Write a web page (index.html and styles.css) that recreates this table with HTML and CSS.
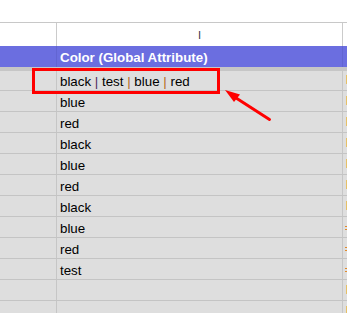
FILE: index.html
```html
<!DOCTYPE html>
<html>
<head>
<meta charset="utf-8">
<link rel="stylesheet" href="styles.css">
</head>
<body>
<div class="sheet">
  <div class="topgap"></div>
  <div class="row colhead">
    <div class="c h"></div>
    <div class="c i"><span>I</span></div>
    <div class="c j"></div>
  </div>
  <div class="row title">
    <div class="c h"></div>
    <div class="c i"><span>Color (Global Attribute)</span></div>
    <div class="c j"></div>
  </div>
  <div class="freeze"></div>
  <div class="row data first">
    <div class="c h"></div>
    <div class="c i"><span>black <span class="p1">|</span> test <span class="p2">|</span> blue <span class="p2">|</span> red</span></div>
    <div class="c j"><span class="bar"></span></div>
  </div>
  <div class="row data"><div class="c h"></div><div class="c i"><span>blue</span></div><div class="c j"><span class="bar"></span></div></div>
  <div class="row data"><div class="c h"></div><div class="c i"><span>red</span></div><div class="c j"><span class="bar"></span></div></div>
  <div class="row data"><div class="c h"></div><div class="c i"><span>black</span></div><div class="c j"><span class="bar"></span></div></div>
  <div class="row data"><div class="c h"></div><div class="c i"><span>blue</span></div><div class="c j"><span class="bar"></span></div></div>
  <div class="row data"><div class="c h"></div><div class="c i"><span>red</span></div><div class="c j"><span class="bar"></span></div></div>
  <div class="row data"><div class="c h"></div><div class="c i"><span>black</span></div><div class="c j"><span class="bar"></span></div></div>
  <div class="row data"><div class="c h"></div><div class="c i"><span>blue</span></div><div class="c j"><span class="eq"></span></div></div>
  <div class="row data"><div class="c h"></div><div class="c i"><span>red</span></div><div class="c j"><span class="eq"></span></div></div>
  <div class="row data"><div class="c h"></div><div class="c i"><span>test</span></div><div class="c j"><span class="eq"></span></div></div>
  <div class="row data"><div class="c h"></div><div class="c i"></div><div class="c j"><span class="bar"></span></div></div>
  <div class="row data"><div class="c h"></div><div class="c i"></div><div class="c j"><span class="bar"></span></div></div>

  <div class="highlight"></div>
  <svg class="arrow" width="347" height="313" viewBox="0 0 347 313">
    <line x1="269.5" y1="119.5" x2="233" y2="96" stroke="#ff0000" stroke-width="3" stroke-linecap="round"/>
    <polygon points="225,90 240,94.5 234,102" fill="#ff0000"/>
  </svg>
</div>
</body>
</html>
```

FILE: styles.css
```css
* { box-sizing: border-box; }
html, body { margin: 0; padding: 0; background: #ffffff; }
body {
  font-family: "Liberation Sans", Arial, sans-serif;
  font-size: 13.33px;
  color: #000;
  overflow: hidden;
}
.sheet {
  position: relative;
  width: 347px;
  height: 313px;
  overflow: hidden;
}
.topgap {
  height: 23px;
  border-bottom: 1px solid #c8c8c8;
}
.row {
  display: flex;
}
.c {
  display: flex;
  align-items: flex-end;
  border-right: 1px solid #c6c6c6;
  line-height: 16px;
  white-space: pre;
}
.h { width: 57px; flex: none; }
.i { width: 286px; flex: none; padding-left: 3px; }
.j { flex: 1; border-right: none; position: relative; }

.colhead { height: 23px; background: #fff; }
.colhead .c { border-right-color: #cbcbcb; }
.colhead .i {
  justify-content: center;
  padding-left: 0;
  padding-bottom: 5px;
  font-size: 11px;
  line-height: 12px;
  color: #3a3a4a;
}

.title {
  height: 21px;
  background: #6b6ee0;
  color: #ffffff;
  font-weight: bold;
}
.title .c { border-right-color: #6265d2; padding-bottom: 1px; }

.freeze { height: 4px; background: #c6c6c6; }

.data {
  height: 21px;
  background: #dedede;
  border-bottom: 1px solid #c4c4c4;
}
.data.first { height: 20px; }
.data .c { padding-bottom: 0; }

.p1 { color: #4e2a5c; }
.p2 { color: #b46a22; }

.bar {
  position: absolute;
  left: 3px;
  bottom: 6px;
  width: 2px;
  height: 9px;
  background: #e6c066;
}
.eq {
  position: absolute;
  left: 2px;
  bottom: 7px;
  width: 3px;
  height: 4px;
  border-top: 1px solid #e28a2a;
  border-bottom: 1px solid #e28a2a;
}

.highlight {
  position: absolute;
  left: 32px;
  top: 68px;
  width: 188px;
  height: 26px;
  border: 3px solid #ff0000;
}
.arrow {
  position: absolute;
  left: 0;
  top: 0;
}
```
